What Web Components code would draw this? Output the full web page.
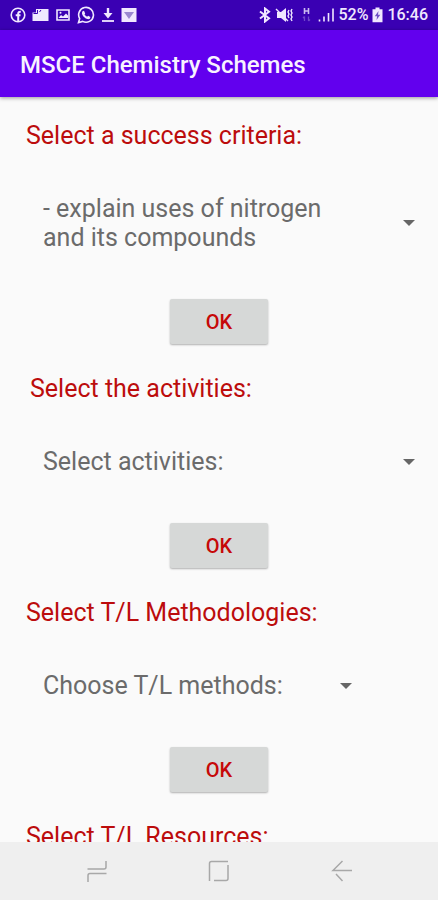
<!DOCTYPE html>
<html lang="en">
<head>
<meta charset="utf-8">
<meta name="viewport" content="width=device-width, initial-scale=1">
<title>MSCE Chemistry Schemes</title>
<style>
  body { margin: 0; font-family: Roboto, "Liberation Sans", sans-serif; background: #fafafa; }
</style>
</head>
<body>
<schemes-app></schemes-app>

<script>
class BaseElement extends HTMLElement {
  constructor() {
    super();
    const template = document.createElement('template');
    template.innerHTML = this.constructor.markup;
    this.attachShadow({ mode: 'open' }).append(template.content.cloneNode(true));
  }
}

customElements.define('status-bar', class extends BaseElement {
  static markup = `
    <style>
      :host { display: flex; flex: none; align-items: center; justify-content: space-between;
        height: 30px; padding: 0 10px 0 10px; background: #3a00b3; color: #f0e8ff; font-size: 16px; line-height: 20px; font-weight: 500; }
      div { display: flex; align-items: center; }
      .left { gap: 6px; }
      .right { gap: 4px; }
      svg { display: block; flex: none; fill: none; stroke: currentColor; stroke-width: 1.6; }
      .f { fill: currentColor; stroke: none; }
    </style>
    <div class="left">
      <svg width="16" height="16" viewBox="0 0 16 16"><circle cx="8" cy="8" r="6.8"/><path stroke-width="2" d="M8.2 14V6.6Q8.2 4.6 10.8 4.7M5.700 8.200h4.800"/></svg>
      <svg width="17" height="16" viewBox="0 0 17 16"><path class="f" d="M4 2h12.500v12H.5V5.500h3.500z"/><path stroke="#3a00b3" stroke-width="1" d="M1.500 6.500h4V3M7.500 5 9 3"/></svg>
      <svg width="16" height="16" viewBox="0 0 16 16"><path d="M2 3h12v10H2z"/><path class="f" d="M3.500 11 6 8l2 1.500L11 6.500l2 2V11z"/><circle class="f" cx="5.500" cy="5.700" r="1"/></svg>
      <svg width="18" height="18" viewBox="0 0 18 18"><path d="M1.500 16.500 2.700 12.600A7.400 7.400 0 1 1 5.700 15.400z"/><path class="f" d="M5.500 5.300 7 4.800 8.200 7.400 7.500 8.500q1 1.600 2.600 2.200l1-1 2.300 1.200q0 2.200-2.200 2.300Q8.800 13.100 6.400 10.500 4.100 7.800 5.500 5.300z"/></svg>
      <svg width="14" height="16" viewBox="0 0 14 16"><path stroke-width="2.400" d="M7 1v7"/><path class="f" d="M2.500 6h9L7 11.500z"/><path stroke-width="1.800" d="M1 14h12"/></svg>
      <svg width="16" height="16" viewBox="0 0 16 16"><path class="f" d="M.5 1h15v14H.5z"/><path fill="#9a88d0" stroke="none" d="M3 5h10l-5 7z"/></svg>
    </div>
    <div class="right">
      <svg width="12" height="16" viewBox="0 0 12 16"><path stroke-width="2" d="M1 4.500 10 11.300 6 14.500v-13L10 4.700 1 11.500"/></svg>
      <svg width="19" height="16" viewBox="0 0 19 16"><path class="f" d="M2 5h4l5-4v14l-5-4H2z"/><path d="M1 2l12 12M14 3l-1 2 1 2-1 2 1 2M17 2l-1 2 1 2-1 2 1 2-1 2 1 2" stroke-width="1.400"/></svg>
      <svg width="16" height="16" viewBox="0 0 16 16"><path opacity=".8" d="M6.500 1v6M10.500 1v6M6.500 4h4"/><path opacity=".3" stroke-width="1.300" d="M6.500 14V9.500M5 11l1.500-1.500M10.500 9.500V14M12 12.500 10.500 14"/></svg>
      <svg width="16" height="16" viewBox="0 0 16 16"><path d="M1.500 12.500v2M6 9.500v5M10.500 6v8.500M15 1.500v13"/></svg>
      <span>52%</span>
      <svg width="11" height="16" viewBox="0 0 11 16"><path class="f" d="M3.500.5h4v1.700H10.500v13H.5v-13h3z"/><path class="f" style="fill:#6f50c4" d="M6.500 4 2.800 9.200h2.300L4.500 13l3.800-5.200H6z"/></svg>
      <span>16:46</span>
    </div>`;
});

customElements.define('app-bar', class extends BaseElement {
  static markup = `
    <style>
      :host { display: flex; flex: none; align-items: center; height: 67px; padding: 2px 20px 0; box-sizing: border-box;
        background: #6200ee; color: #f8f2ff; box-shadow: 0 1px 4px rgba(0,0,0,.4); z-index: 1; }
      h1 { margin: 0; font-size: 24px; line-height: 28px; font-weight: 500; }
    </style>
    <h1><slot></slot></h1>`;
});

customElements.define('scheme-field', class extends BaseElement {
  static markup = `
    <style>
      :host { display: flex; flex-direction: column; font-size: 25px; line-height: 29px; }
      label { padding-left: 26px; color: #bc0c0c; }
      :host([inset]) label { padding-left: 30px; }
      select { appearance: base-select; display: flex; align-items: center; justify-content: space-between;
        box-sizing: border-box; min-height: 29px; margin: 44px 23px 47px 43px; padding: 0; border: 0; border-radius: 0;
        background: none; color: #6b6b6b; font: inherit; white-space: normal; gap: 80px; text-align: left; }
      :host([compact]) select { width: 309px; gap: 24px; }
      select::picker-icon { content: ""; flex: none; width: 0; height: 0;
        border: 6px solid transparent; border-top-color: #666; border-bottom: 0; }
      button { align-self: center; width: 98px; height: 45px; padding: 0; border: 0; border-radius: 2px;
        background: #d6d8d7; color: #c60808; box-shadow: 0 1px 2px rgba(0,0,0,.3);
        font: 500 20px/24px Roboto, "Liberation Sans", sans-serif; }
    </style>
    <label for="choice"></label>
    <select id="choice"><option></option></select>
    <button type="button">OK</button>`;
  connectedCallback() {
    this.shadowRoot.querySelector('label').textContent = this.getAttribute('label');
    this.shadowRoot.querySelector('option').textContent = this.getAttribute('value');
  }
});

customElements.define('section-label', class extends BaseElement {
  static markup = `
    <style>
      :host { display: block; flex: none; padding-left: 26px; color: #bc0c0c; font-size: 25px; line-height: 29px; }
    </style>
    <slot></slot>`;
});

customElements.define('nav-bar', class extends BaseElement {
  static markup = `
    <style>
      :host { display: grid; flex: none; grid-template-columns: repeat(3, 1fr); height: 58px; padding: 0 35px 0 36px; background: #efefef; }
      button { display: grid; place-items: center; padding: 0; border: 0; background: none; color: #a8a8a8; }
      svg { fill: none; stroke: currentColor; stroke-width: 1.5; }
    </style>
    <button type="button" aria-label="Recent apps"><svg width="22" height="24" viewBox="0 0 22 24"><path d="M1.500 10H18q2 0 2-2V2M20.500 14.500H4q-2 0-2 2V23"/></svg></button>
    <button type="button" aria-label="Home"><svg width="22" height="22" viewBox="0 0 22 22"><path d="M20 1.500H3.500Q1.500 1.500 1.500 3.500V21M20 5v13.500q0 2-2 2H6"/></svg></button>
    <button type="button" aria-label="Back"><svg width="22" height="22" viewBox="0 0 22 22"><path d="M11.500 1 2 10.500H21M5 14l6.500 7"/></svg></button>`;
});

customElements.define('schemes-app', class extends BaseElement {
  static markup = `
    <style>
      :host { display: flex; flex-direction: column; height: 100vh; }
      main { display: flex; flex: 1; flex-direction: column; gap: 30px; min-height: 0; padding: 24px 0;
        box-sizing: border-box; overflow-y: auto; scrollbar-width: none; }
      scheme-field { flex: none; }
    </style>
    <status-bar></status-bar>
    <app-bar>MSCE Chemistry Schemes</app-bar>
    <main>
      <scheme-field label="Select a success criteria:" value="- explain uses of nitrogen and its compounds"></scheme-field>
      <scheme-field inset label="Select the activities:" value="Select activities:"></scheme-field>
      <scheme-field compact label="Select T/L Methodologies:" value="Choose T/L methods:"></scheme-field>
      <section-label>Select T/L Resources:</section-label>
    </main>
    <nav-bar></nav-bar>`;
});
</script>
</body>
</html>
